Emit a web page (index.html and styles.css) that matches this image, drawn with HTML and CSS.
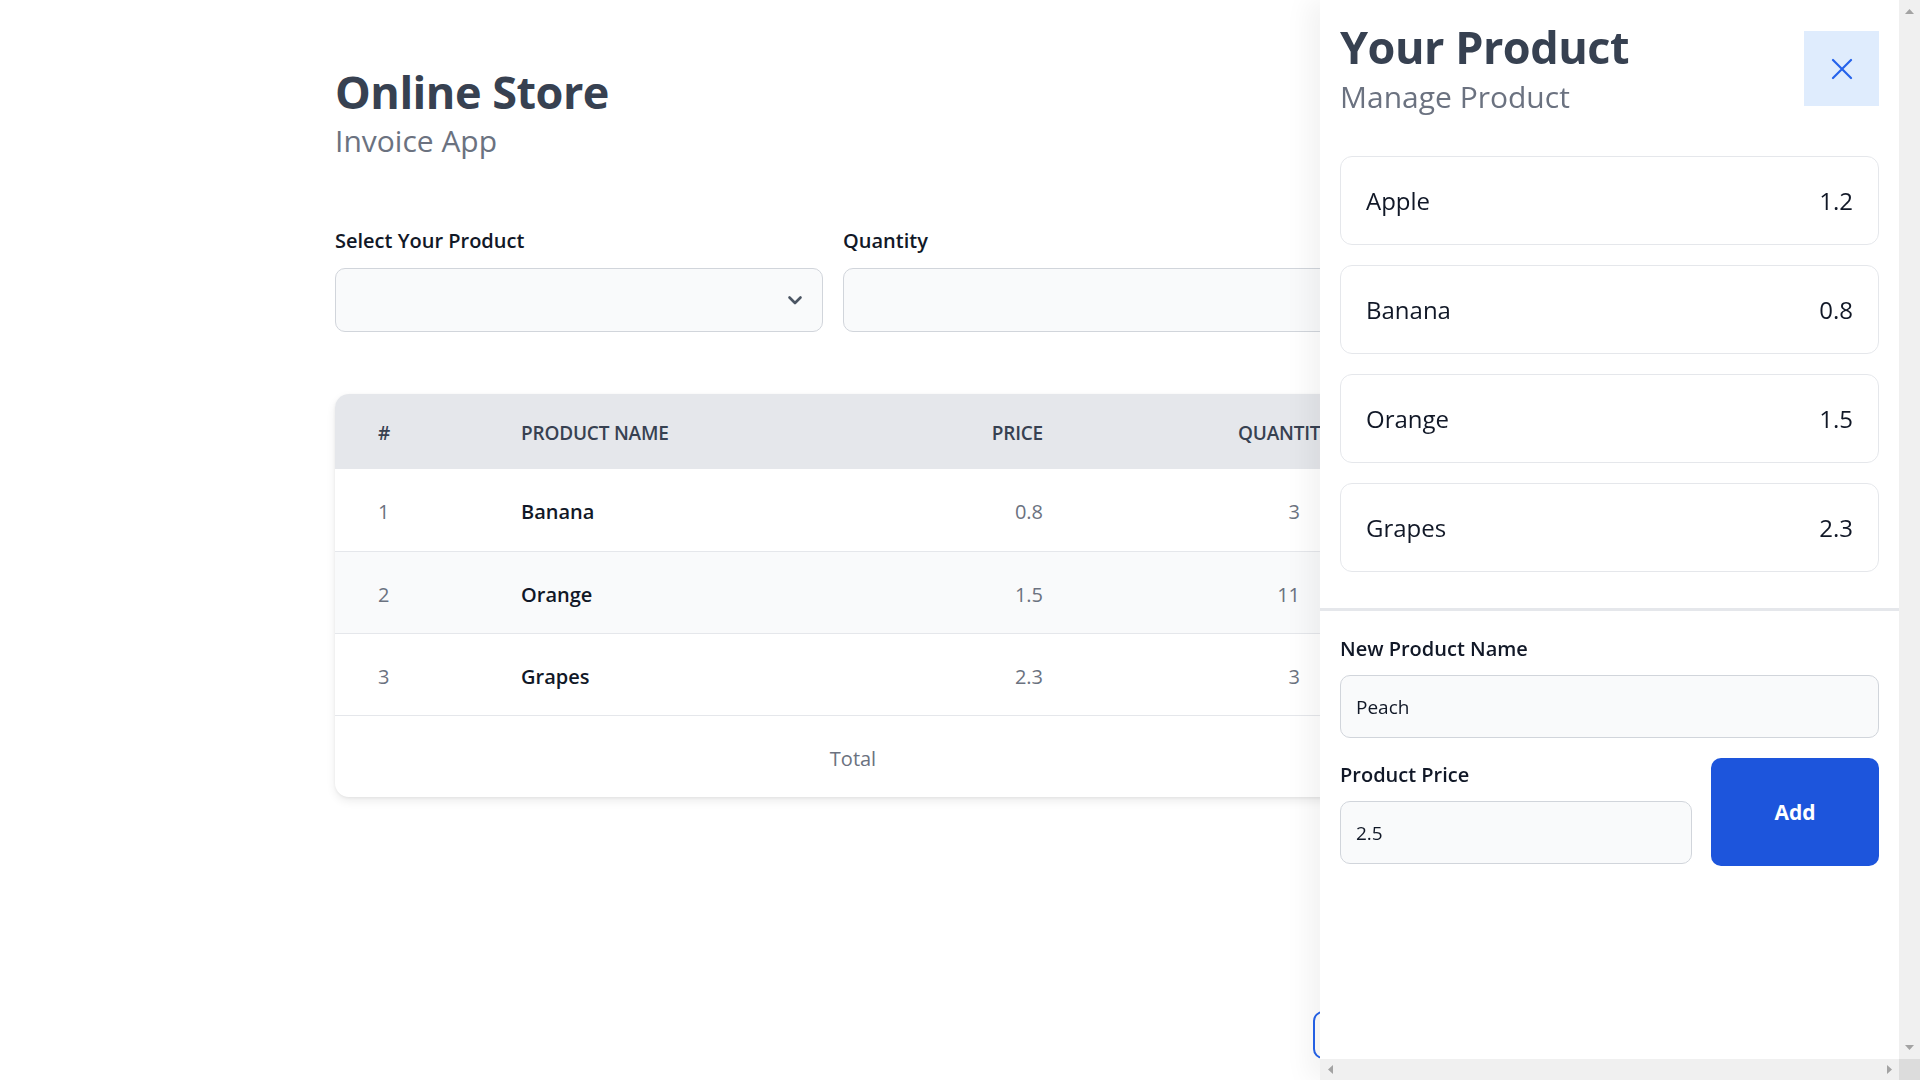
FILE: index.html
```html
<!DOCTYPE html>
<html lang="en">
<head>
<meta charset="utf-8">
<title>Online Store - Invoice App</title>
<link rel="stylesheet" href="styles.css">
</head>
<body>
<main class="container">
  <header class="page-head">
    <h1 class="title">Online Store</h1>
    <p class="subtitle">Invoice App</p>
  </header>

  <form class="order-form">
    <div class="field span-2">
      <label class="label">Select Your Product</label>
      <div class="select-box">
        <svg class="chevron" width="16" height="11" viewBox="0 0 16 11"><path d="M2.5 2.5l5.5 5.5 5.5-5.5" fill="none" stroke="#4b5563" stroke-width="2.6" stroke-linecap="round" stroke-linejoin="round"/></svg>
      </div>
    </div>
    <div class="field span-2">
      <label class="label">Quantity</label>
      <div class="input-box"></div>
    </div>
    <div class="field">
      <label class="label">&nbsp;</label>
      <button type="button" class="btn-primary">Add</button>
    </div>
  </form>

  <div class="table-card">
    <table class="invoice">
      <colgroup>
        <col class="c1"><col class="c2"><col class="c3"><col class="c4"><col class="c5">
      </colgroup>
      <thead>
        <tr><th>#</th><th>Product Name</th><th class="r">Price</th><th class="q">Quantity</th><th class="r">Cost</th></tr>
      </thead>
      <tbody>
        <tr><td class="num">1</td><td class="name">Banana</td><td class="r num">0.8</td><td class="r num">3</td><td class="r num">2.4</td></tr>
        <tr class="alt"><td class="num">2</td><td class="name">Orange</td><td class="r num">1.5</td><td class="r num">11</td><td class="r num">16.5</td></tr>
        <tr><td class="num">3</td><td class="name">Grapes</td><td class="r num">2.3</td><td class="r num">3</td><td class="r num">6.9</td></tr>
      </tbody>
      <tfoot>
        <tr><td colspan="4" class="total">Total</td><td class="r num">25.8</td></tr>
      </tfoot>
    </table>
  </div>
</main>

<button type="button" class="manage-btn">Manage Product</button>

<aside class="drawer">
  <div class="drawer-body">
    <div class="drawer-top">
      <div class="drawer-head">
        <div>
          <h2 class="drawer-title">Your Product</h2>
          <p class="drawer-sub">Manage Product</p>
        </div>
        <button type="button" class="close-btn" aria-label="Close">
          <svg width="22" height="22" viewBox="0 0 22 22"><path d="M2 2L20 20M20 2L2 20" stroke="#2563eb" stroke-width="2.2" stroke-linecap="round"/></svg>
        </button>
      </div>
      <ul class="product-list">
        <li class="product-card"><span>Apple</span><span>1.2</span></li>
        <li class="product-card"><span>Banana</span><span>0.8</span></li>
        <li class="product-card"><span>Orange</span><span>1.5</span></li>
        <li class="product-card"><span>Grapes</span><span>2.3</span></li>
      </ul>
    </div>
    <form class="new-product">
      <label class="label lg">New Product Name</label>
      <input class="text-input" type="text" value="Peach">
      <div class="price-row">
        <div class="price-field">
          <label class="label lg">Product Price</label>
          <input class="text-input" type="text" value="2.5">
        </div>
        <button type="button" class="add-btn">Add</button>
      </div>
    </form>
  </div>
  <div class="vbar">
    <svg width="9" height="5" viewBox="0 0 9 5"><path d="M0 5L4.5 0L9 5z" fill="#a3a3a3"/></svg>
    <svg width="9" height="5" viewBox="0 0 9 5"><path d="M0 0L4.5 5L9 0z" fill="#a3a3a3"/></svg>
  </div>
  <div class="hbar">
    <svg width="5" height="9" viewBox="0 0 5 9"><path d="M5 0L0 4.5L5 9z" fill="#a3a3a3"/></svg>
    <svg width="5" height="9" viewBox="0 0 5 9"><path d="M0 0L5 4.5L0 9z" fill="#a3a3a3"/></svg>
  </div>
  <div class="corner"></div>
</aside>
</body>
</html>
```

FILE: styles.css
```css
* { box-sizing: border-box; }
html, body { margin: 0; padding: 0; }
body {
  font-family: "Open Sans", "Noto Sans", sans-serif;
  background: #ffffff;
  color: #111827;
  overflow: hidden;
  height: 100vh;
}

.container {
  width: 1250px;
  margin: 0 auto;
  padding-top: 64px;
}

.title {
  margin: 0;
  font-size: 45px;
  line-height: 56px;
  font-weight: 700;
  color: #374151;
  letter-spacing: -0.5px;
}
.subtitle {
  margin: 0;
  font-size: 30px;
  line-height: 42px;
  color: #6b7280;
}

.order-form {
  margin-top: 65px;
  display: grid;
  grid-template-columns: repeat(5, 1fr);
  column-gap: 20px;
}
.span-2 { grid-column: span 2; }
.field { display: flex; flex-direction: column; }

.label {
  display: block;
  font-size: 20px;
  line-height: 28px;
  font-weight: 600;
  color: #111827;
  margin-bottom: 13px;
}
.label.lg { margin-bottom: 12px; }

.select-box, .input-box {
  height: 64px;
  background: #f9fafb;
  border: 1px solid #d1d5db;
  border-radius: 10px;
  position: relative;
}
.chevron { position: absolute; right: 19px; top: 26px; }

.btn-primary {
  height: 64px;
  border: none;
  border-radius: 10px;
  background: #1d4ed8;
  color: #fff;
  font: 700 20px "Open Sans", sans-serif;
}

.table-card {
  margin-top: 62px;
  border-radius: 14px;
  overflow: hidden;
  box-shadow: 0 4px 10px rgba(0, 0, 0, 0.08), 0 1px 3px rgba(0, 0, 0, 0.06);
}
.invoice {
  width: 1250px;
  border-collapse: collapse;
  table-layout: fixed;
}
.c1 { width: 143px; }
.c2 { width: 400px; }
.c3 { width: 208px; }
.c4 { width: 257px; }
.c5 { width: 242px; }

.invoice th {
  height: 75px;
  background: #e5e7eb;
  text-align: left;
  padding: 3px 43px 0;
  font-size: 19px;
  font-weight: 600;
  text-transform: uppercase;
  color: #374151;
  white-space: nowrap;
  letter-spacing: -0.2px;
}
.invoice th.q { padding-left: 152px; padding-right: 0; }
.invoice td {
  height: 82px;
  padding: 4px 43px 0;
  font-size: 20px;
  border-top: 1px solid #e5e7eb;
}
.invoice tbody tr:first-child td { border-top: none; }
.invoice .alt td { background: #f9fafb; }
.invoice .r { text-align: right; }
.invoice .num { color: #6b7280; }
.invoice .name { font-weight: 600; color: #111827; }
.invoice .total { text-align: center; color: #6b7280; padding-left: 71px; }

.manage-btn {
  position: fixed;
  left: 1313px;
  top: 1011px;
  width: 240px;
  height: 48px;
  border: 2px solid #2563eb;
  border-radius: 10px;
  background: #fff;
  color: #2563eb;
  font: 600 18px "Open Sans", sans-serif;
}

.drawer {
  position: fixed;
  top: 0;
  right: 0;
  width: 600px;
  height: 100vh;
  background: #fff;
  box-shadow: -12px 0 24px rgba(0, 0, 0, 0.05);
  z-index: 10;
  display: grid;
  grid-template-columns: 1fr 21px;
  grid-template-rows: 1fr 21px;
}
.drawer-body { overflow: hidden; min-width: 0; min-height: 0; }
.vbar {
  background: #f0f0f0;
  display: flex;
  flex-direction: column;
  justify-content: space-between;
  align-items: center;
  padding: 9px 0 9px;
}
.hbar {
  background: #f0f0f0;
  display: flex;
  justify-content: space-between;
  align-items: center;
  padding: 0 7px 0 8px;
}
.corner { background: #dcdcdc; }

.drawer-top {
  padding: 20px 20px 36px;
  border-bottom: 3px solid #e5e7eb;
}
.drawer-head {
  display: flex;
  justify-content: space-between;
  align-items: flex-start;
}
.drawer-title {
  margin: 0;
  font-size: 45px;
  line-height: 54px;
  font-weight: 700;
  color: #374151;
  letter-spacing: -0.5px;
}
.drawer-sub {
  margin: 2px 0 0;
  font-size: 30px;
  line-height: 42px;
  color: #6b7280;
}
.close-btn {
  margin-top: 11px;
  width: 75px;
  height: 75px;
  border: none;
  background: #dfecfd;
  display: flex;
  align-items: center;
  justify-content: center;
  padding: 0;
}

.product-list {
  list-style: none;
  margin: 38px 0 0;
  padding: 0;
  display: flex;
  flex-direction: column;
  gap: 20px;
}
.product-card {
  height: 89px;
  border: 1px solid #e5e7eb;
  border-radius: 12px;
  display: flex;
  align-items: center;
  justify-content: space-between;
  padding: 0 25px;
  font-size: 24px;
  color: #111827;
}

.new-product { padding: 24px 20px 20px; }
.text-input {
  display: block;
  width: 100%;
  height: 63px;
  background: #f9fafb;
  border: 1px solid #d1d5db;
  border-radius: 10px;
  padding: 0 15px;
  font: 19px "Open Sans", sans-serif;
  color: #111827;
  outline: none;
}
.price-row {
  margin-top: 20px;
  display: flex;
  gap: 19px;
  align-items: stretch;
}
.price-field { flex: 1; padding-top: 3px; }
.add-btn {
  width: 168px;
  min-height: 108px;
  border: none;
  border-radius: 10px;
  background: #1d55dc;
  color: #ffffff;
  font: 700 21px "Open Sans", sans-serif;
}
```
